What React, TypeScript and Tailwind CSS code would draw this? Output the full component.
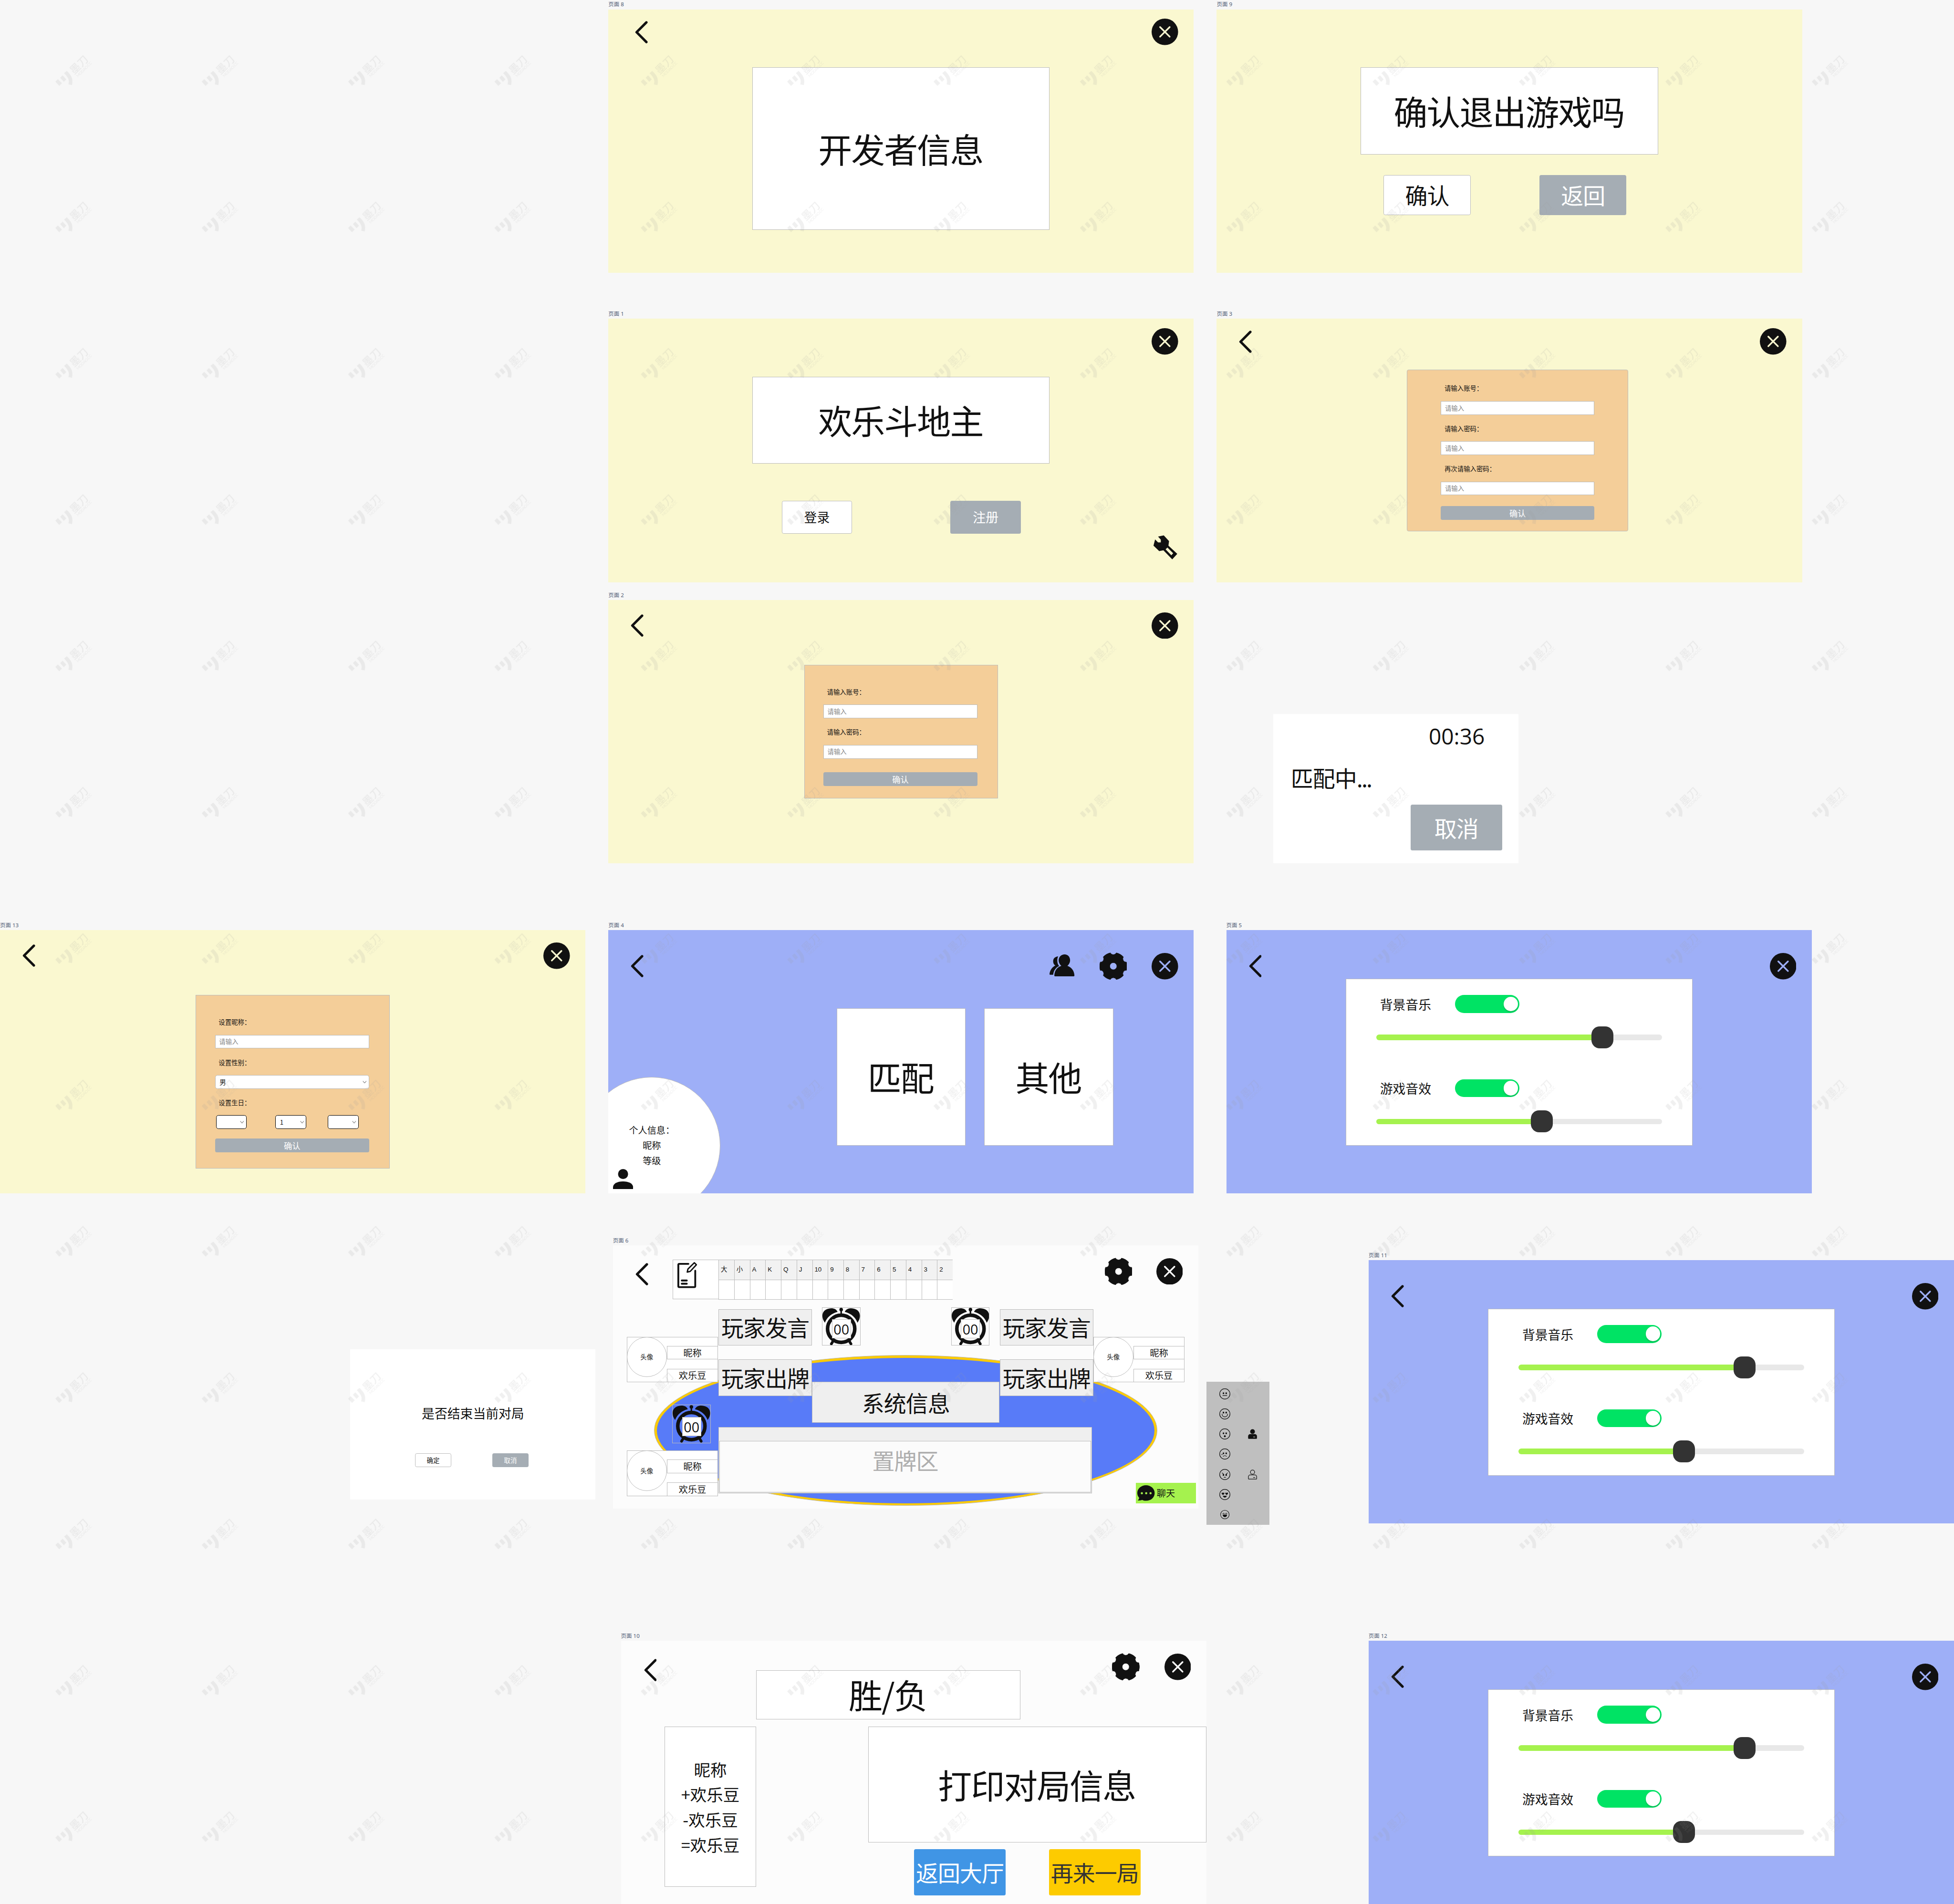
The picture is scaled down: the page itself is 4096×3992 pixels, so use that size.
import React from 'react';

type P = { className?: string; children?: React.ReactNode };

/* ---------- icons ---------- */

const BackIcon = ({ className = '' }: P) => (
  <svg viewBox="0 0 28 49" className={'h-[49px] w-[28px] shrink-0 ' + className} fill="none">
    <path d="M25 3 3.6 24.5 25 46" stroke="#111" strokeWidth="5.4" strokeLinecap="round" strokeLinejoin="round" />
  </svg>
);

const CloseIcon = ({ className = '' }: P) => (
  <svg viewBox="0 0 58 58" className={'size-[58px] shrink-0 ' + className} fill="none">
    <circle cx="29" cy="29" r="29" fill="#111" />
    <path d="M18.5 18.5 39.5 39.5M39.5 18.5 18.5 39.5" stroke="currentColor" strokeWidth="3.6" strokeLinecap="round" />
  </svg>
);

const GearIcon = ({ className = '' }: P) => (
  <svg viewBox="0 0 60 60" className={'size-[60px] shrink-0 ' + className}>
    <path
      fill="#111"
      stroke="#111"
      strokeWidth="1"
      strokeLinejoin="round"
      fillRule="evenodd"
      d="M23.500.9A7.300 7.300 0 0 0 36.500.9 30 30 0 0 1 52 9.700 7.300 7.300 0 0 0 58.600 21 30 30 0 0 1 58.600 39 7.300 7.300 0 0 0 52 50.300 30 30 0 0 1 36.500 59.100 7.300 7.300 0 0 0 23.500 59.100 30 30 0 0 1 8 50.300 7.300 7.300 0 0 0 1.400 39 30 30 0 0 1 1.400 21 7.300 7.300 0 0 0 8 9.700 30 30 0 0 1 23.500.9ZM30 22.200a7.800 7.800 0 1 0 0 15.600 7.800 7.800 0 0 0 0-15.600Z"
    />
  </svg>
);

const WrenchIcon = ({ className = '' }: P) => (
  <svg viewBox="0 0 54 54" className={'size-[54px] ' + className}>
    <path fill="#111" fillRule="evenodd" d="M11 3 23.500.4 35 13l-1.300 10L53 41 42 53 22.700 33l-9.200 2L1 23 4.500 9.500 11 16h6v-6ZM27.500 31 40 44l4-4.300L31.500 27Z" />
  </svg>
);

const GroupIcon = ({ className = '' }: P) => (
  <svg viewBox="0 0 55 48" className={'h-[48px] w-[55px] shrink-0 ' + className} fill="#111">
    <path d="M33 0c7 0 12 5.500 12 13 0 5-3 10-6 12 9 3 15 11 15.500 21 0 1-.5 2-1.500 2H12c-1 0-1.500-1-1.500-2C11 36 16 28 26 25c-3-2-6-7-6-12C20 5.500 26 0 33 0Z" />
    <path d="M19 4.500C12 5 8 9 8 15c0 4 2 8 5 9C6 28 1 34 0 43c0 1 .5 1.500 1.500 1.500H8C9 36 13 29 21 25.500 18 22 17 18 17 13c0-3 .500-6 2-8.500Z" />
  </svg>
);

const PersonIcon = ({ className = '' }: P) => (
  <svg viewBox="0 0 44 44" className={'size-[44px] ' + className} fill="#111">
    <circle cx="22" cy="11" r="11" />
    <path d="M0 44v-4c0-8 9-13 22-13s22 5 22 13v4Z" />
  </svg>
);

const NoteIcon = () => (
  <svg viewBox="0 0 44 58" className="h-[58px] w-[44px]" fill="none" stroke="#111" strokeWidth="4" strokeLinecap="round" strokeLinejoin="round">
    <path d="M24 5H4a2 2 0 0 0-2 2v47a2 2 0 0 0 2 2h33a2 2 0 0 0 2-2V20" />
    <path d="M9.500 41.500h11M9.500 48.500h11" />
    <path d="M37 2.500 41.500 7 28 21.500l-6.500 1.500 1.500-6.500Z" strokeWidth="3" />
  </svg>
);

const ClockIcon = () => (
  <svg viewBox="0 0 84 84" className="absolute inset-0 size-full" fill="none">
    <circle cx="42" cy="47" r="30.500" stroke="#111" strokeWidth="8" />
    <path d="M5.500 33.500C-4 20 0 8 8 4 18-1 30 0 34 9 20 13 10 21 5.500 33.500ZM78.500 33.500C88 20 84 8 76 4 66-1 54 0 50 9c14 4 24 12 28.500 24.500Z" fill="#111" />
    <circle cx="42" cy="4" r="4" fill="#111" />
    <path d="M42 4v11" stroke="#111" strokeWidth="3.500" />
    <path d="M23 76l-3 5M61 76l3 5" stroke="#111" strokeWidth="6" strokeLinecap="round" />
  </svg>
);

const ChatIcon = () => (
  <svg viewBox="0 0 38 34" className="h-[34px] w-[38px] shrink-0">
    <path d="M19 0c10 0 19 7 19 17s-8 17-19 17c-3 0-6-.7-8.500-2C8 33 5 33.500 1 33.500c2-2 3-4 3-6C1.500 24.500 0 21 0 17 0 7 9 0 19 0Z" fill="#111" />
    <circle cx="10" cy="17.500" r="2.400" fill="#a5f24e" />
    <circle cx="19.500" cy="17.500" r="2.400" fill="#a5f24e" />
    <circle cx="29" cy="17.500" r="2.400" fill="#a5f24e" />
  </svg>
);

const Eyes = ({ y = 10.5 }: { y?: number }) => (
  <g fill="#111" stroke="none">
    <ellipse cx="9" cy={y} rx="1.700" ry="2" />
    <ellipse cx="15" cy={y} rx="1.700" ry="2" />
  </g>
);

const faces: React.ReactNode[] = [
  <g key="neutral">
    <Eyes />
    <path d="M7.500 15.500h9" />
  </g>,
  <g key="smile">
    <Eyes y={9} />
    <path d="M6 12.500c.5 8 11.500 8 12 0" />
  </g>,
  <g key="surprised">
    <Eyes />
    <circle cx="12" cy="17" r="1.500" fill="#111" />
  </g>,
  <g key="crying">
    <Eyes />
    <path d="M8.500 17c1.500-1.800 5.500-1.800 7 0" />
    <path d="M5.800 12.500v3" strokeDasharray="1 2" strokeWidth="1.600" />
  </g>,
  <g key="angry">
    <Eyes y={13} />
    <path d="M10.500 18.500c.5-.8 2.500-.8 3 0M6 8.500l3 2.500M18 8.500l-3 2.500" />
  </g>,
  <g key="love">
    <path d="M5 9.500c0-2 2.500-2 3-.7.500-1.300 3-1.300 3 .7 0 1.500-2 3-3 3.500-1-.5-3-2-3-3.500ZM13 9.500c0-2 2.500-2 3-.7.500-1.300 3-1.300 3 .7 0 1.500-2 3-3 3.500-1-.5-3-2-3-3.500Z" fill="#111" stroke="none" />
    <path d="M8.500 15.500c1.500 3.500 5.500 3.500 7 0Z" fill="#111" />
  </g>,
  <g key="laugh">
    <path d="M6.500 9.500c1-1.500 3-1.500 4 0M13.500 9.500c1-1.500 3-1.500 4 0" />
    <path d="M7 12.500h10c-.5 7-9.500 7-10 0Z" fill="#111" />
  </g>,
];

const UserIcon = ({ solid }: { solid?: boolean }) => (
  <svg viewBox="0 0 20 22" className="h-[22px] w-[20px]" fill={solid ? '#111' : 'none'} stroke="#111" strokeWidth="1.300" strokeLinejoin="round">
    <circle cx="10" cy="5.700" r="4.600" />
    <path d="M1 20v-4.500c0-2 2-3.500 4-3.500h10c2 0 4 1.500 4 3.500V20c0 .7-.5 1-1 1H2c-.5 0-1-.3-1-1Z" />
    <path d="M11.500 17.500h4" stroke={solid ? '#bfbfbf' : '#111'} />
  </svg>
);

const Chevron = () => (
  <svg viewBox="0 0 9 6" className="h-[6px] w-[9px] shrink-0" fill="none" stroke="#888" strokeWidth="1.300">
    <path d="M.7.7 4.500 4.900 8.300.7" />
  </svg>
);

/* ---------- wireframe parts ---------- */

const Board = ({ className = '', fill, label, children }: P & { label: string; fill: string }) => (
  <section className={'absolute w-[1280px] ' + className}>
    <h2 className="h-[19px] font-['Noto_Sans','Noto_Sans_CJK_SC',sans-serif] text-[12px] leading-[16px] whitespace-nowrap text-[#4e5a73]">{label}</h2>
    <div className={'relative h-[576px] overflow-hidden ' + fill}>{children}</div>
  </section>
);

const Header = ({ className = '', children }: P) => <header className={'flex items-center pr-[34px] pl-[49px] ' + className}>{children}</header>;

const Box = ({ className = '', children }: P) => (
  <div className={'flex shrink-0 items-center justify-center border border-[#bbb] leading-none whitespace-nowrap ' + className}>{children}</div>
);

const Title = ({ className = '', children }: P) => <Box className={'bg-white pr-[2px] pb-[3px] text-[74px] tracking-[-2px] ' + className}>{children}</Box>;

const Button = ({ className = '', children }: P) => (
  <button className={'flex shrink-0 items-center justify-center rounded-[4px] leading-none whitespace-nowrap ' + className}>{children}</button>
);

const Label = ({ children }: P) => <div className="flex h-[30px] items-center pl-[8px] text-[14px] leading-none">{children}</div>;

const Input = () => (
  <div className="mt-[13px] mb-[15px] flex h-[30px] items-center border border-[#bbb] bg-white pl-[8px] text-[14px] leading-none text-[#888]">请输入</div>
);

const Select = ({ className = '', children }: P) => (
  <div className={'flex h-[30px] items-center justify-between rounded-[5px] border bg-white pr-[4px] pl-[9px] text-[14px] leading-none ' + className}>
    <span>{children}</span>
    <Chevron />
  </div>
);

const Confirm = ({ className = '' }: P) => <Button className={'h-[30px] w-full bg-[#a5adb4] text-[18px] text-white ' + className}>确认</Button>;

const SettingRow = ({ title, fill }: { title: string; fill: string }) => (
  <div className="h-[184px]">
    <div className="flex h-[39px] items-center">
      <div className="ml-[8px] w-[164px] pt-[3px] text-[28px] leading-none">{title}</div>
      <div className="flex h-[39px] w-[141px] items-center justify-end rounded-full bg-[#00e364] pr-[3px]">
        <div className="size-[32px] rounded-full bg-white shadow-[0_2px_3px_rgba(0,0,0,0.2)]" />
      </div>
    </div>
    <div className="mt-[29.500px] flex h-[48px] items-center">
      <div className={'h-[12px] rounded-l-full bg-[#a5f24e] ' + fill} />
      <div className="size-[48px] shrink-0 rounded-[18px] bg-[#333]" />
      <div className="h-[12px] flex-1 rounded-r-full bg-[#e8e8e8]" />
    </div>
  </div>
);

const Settings = ({ className = '', label }: P & { label: string }) => (
  <Board label={label} fill="bg-[#9eaff7]" className={className}>
    <Header className="h-[106px] justify-between pt-[52px]">
      <BackIcon />
      <CloseIcon className="text-[#9eaff7]" />
    </Header>
    <div className="mx-auto h-[365px] w-[758px] border border-[#bbb] bg-white pt-[35px] pr-[65px] pl-[66px]">
      <SettingRow title="背景音乐" fill="w-[470px]" />
      <SettingRow title="游戏音效" fill="w-[338px]" />
    </div>
  </Board>
);

const Player = ({ className = '' }: P) => (
  <div className={'flex h-[100px] w-[200px] shrink-0 border border-[#bbb] bg-white leading-none ' + className}>
    <div className="-mt-px -ml-px flex size-[88px] items-center justify-center rounded-full border border-[#bbb] text-[14px]">头像</div>
    <div className="-mr-px flex flex-1 flex-col justify-between pt-[19px] text-[20px]">
      <div className="flex h-[30px] items-center justify-center border border-[#bbb]">昵称</div>
      <div className="-mb-px flex h-[30px] items-center justify-center border border-[#bbb]">欢乐豆</div>
    </div>
  </div>
);

const Clock = ({ className = '' }: P) => (
  <div className={'relative flex size-[84px] shrink-0 items-center justify-center border border-[#bbb] pt-[11px] ' + className}>
    <ClockIcon />
    <div className="relative flex size-[42px] items-center justify-center border border-[#bbb] bg-white pt-[3px] font-['Open_Sans',sans-serif] text-[30px] leading-none">00</div>
  </div>
);

const Speech = () => (
  <div className="flex flex-col gap-[30px] pt-[4px]">
    <Box className="h-[80px] w-[204px] bg-[#efefef] text-[49px] tracking-[-1px]">玩家发言</Box>
    <Box className="h-[80px] w-[204px] bg-[#efefef] text-[49px] tracking-[-1px]">玩家出牌</Box>
  </div>
);

const cards = ['大', '小', 'A', 'K', 'Q', 'J', '10', '9', '8', '7', '6', '5', '4', '3', '2'];

const Watermark = () => (
  <svg className="pointer-events-none absolute inset-0 h-[4164px] w-[4272px]">
    <defs>
      <pattern id="wm" width="320" height="320" patternUnits="userSpaceOnUse">
        <g transform="translate(121 120)" fill="#999" fillOpacity="0.15">
          <path d="M0 58.500 5.500 53 14.500 62 8.500 68ZM10.500 50 16 44.700 24 53.500 18.500 59ZM19 40l6-5c8 8 15 15 11.500 31l-8-1.500C32 55 27 48 19 40Z" />
          <g transform="rotate(-45)" fontFamily="Noto Sans CJK SC">
            <text x="-1.800" y="60" fontSize="23" fontWeight="500">墨刀</text>
            <text x="0" y="70" fontSize="8.500" textLength="44" fontFamily="Lato">MODAO.CC</text>
          </g>
        </g>
      </pattern>
    </defs>
    <rect width="4272" height="4164" fill="url(#wm)" />
  </svg>
);

export default function App() {
  return (
    <div className="h-[3992px] w-[4096px] overflow-hidden bg-[#f7f7f7]">
      <main className="relative h-[4164px] w-[4272px] overflow-hidden bg-[#f7f7f7] font-['Noto_Sans_CJK_SC',sans-serif] text-[#111] [zoom:0.9588]">
        <Board label="页面 8" fill="bg-[#faf8d0]" className="top-[1.500px] left-[1330px]">
          <Header className="h-[79px] justify-between pt-[20px] pl-[58px]!">
            <BackIcon />
            <CloseIcon className="text-[#faf8d0]" />
          </Header>
          <Title className="mx-auto mt-[48px] h-[355px] w-[650px]">开发者信息</Title>
        </Board>

        <Board label="页面 9" fill="bg-[#faf8d0]" className="top-[1.500px] left-[2660px]">
          <div className="pt-[127px]">
            <Title className="mx-auto h-[190px] w-[650px]">确认退出游戏吗</Title>
            <div className="mt-[45px] flex gap-[151px] pl-[365px] text-[49px] tracking-[-1px]">
              <Button className="h-[88px] w-[190px] border border-[#bbb] bg-white">确认</Button>
              <Button className="h-[88px] w-[190px] bg-[#a5adb4] text-white">返回</Button>
            </div>
          </div>
        </Board>

        <Board label="页面 1" fill="bg-[#faf8d0]" className="top-[678px] left-[1330px]">
          <Header className="h-[80px] justify-end pt-[20px]">
            <CloseIcon className="text-[#faf8d0]" />
          </Header>
          <Title className="mx-auto mt-[47px] h-[190px] w-[650px]">欢乐斗地主</Title>
          <div className="mt-[81px] flex gap-[215px] pl-[379px] text-[28px]">
            <Button className="h-[72px] w-[154px] border border-[#bbb] bg-white">登录</Button>
            <Button className="h-[72px] w-[154px] bg-[#a5adb4] text-white">注册</Button>
          </div>
          <WrenchIcon className="mt-[3px] mr-[35px] ml-auto" />
        </Board>

        <Board label="页面 3" fill="bg-[#faf8d0]" className="top-[678px] left-[2660px]">
          <Header className="h-[80px] justify-between pt-[20px]">
            <BackIcon />
            <CloseIcon className="text-[#faf8d0]" />
          </Header>
          <div className="mt-[31px] ml-[416px] h-[354px] w-[484px] rounded-[4px] border border-[#bbb] bg-[#f4ce99] px-[73px] pt-[25px]">
            <Label>请输入账号：</Label>
            <Input />
            <Label>请输入密码：</Label>
            <Input />
            <Label>再次请输入密码：</Label>
            <Input />
            <Confirm className="mt-[24px]" />
          </div>
        </Board>

        <Board label="页面 2" fill="bg-[#faf8d0]" className="top-[1293px] left-[1330px]">
          <Header className="h-[86px] justify-between pt-[26px]">
            <BackIcon />
            <CloseIcon className="text-[#faf8d0]" />
          </Header>
          <div className="mx-auto mt-[56px] h-[292px] w-[424px] border border-[#bbb] bg-[#f4ce99] pt-[43px] pr-[44px] pl-[41px]">
            <Label>请输入账号：</Label>
            <Input />
            <Label>请输入密码：</Label>
            <Input />
            <Confirm className="mt-[30px]" />
          </div>
        </Board>

        <section className="absolute top-[1561px] left-[2784px] flex h-[327px] w-[536px] flex-col items-start bg-white pt-[24px] text-[48px] leading-none">
          <p className="mr-[74px] self-end font-['Open_Sans',sans-serif]">00:36</p>
          <p className="mt-[43px] ml-[38px] text-[49px] tracking-[-1px]">
            匹配中<span className="tracking-[-3px]">...</span>
          </p>
          <Button className="mt-[35px] ml-[300px] h-[100px] w-[200px] bg-[#a5adb4] text-[49px] tracking-[-1px] text-white">取消</Button>
        </section>

        <Board label="页面 13" fill="bg-[#faf8d0]" className="top-[2015px] left-0">
          <Header className="h-[86px] justify-between pt-[26px]">
            <BackIcon />
            <CloseIcon className="text-[#faf8d0]" />
          </Header>
          <div className="mx-auto mt-[56px] h-[379px] w-[424px] border border-[#bbb] bg-[#f4ce99] pt-[43px] pr-[44px] pl-[41px]">
            <Label>设置昵称：</Label>
            <Input />
            <Label>设置性别：</Label>
            <Select className="mt-[13px] mb-[15px] border-[#bbb]">男</Select>
            <Label>设置生日：</Label>
            <div className="mt-[13px] flex pl-[2px]">
              <Select className="w-[67px] border-black" />
              <Select className="ml-[63px] w-[68px] border-black">1</Select>
              <Select className="ml-[47px] w-[67px] border-black" />
            </div>
            <Confirm className="mt-[21px]" />
          </div>
        </Board>

        <Board label="页面 4" fill="bg-[#9eaff7]" className="top-[2015px] left-[1330px]">
          <Header className="h-[109px] gap-[54px] pt-[49px]">
            <BackIcon className="mr-auto" />
            <GroupIcon className="mb-[4px]" />
            <GearIcon />
            <CloseIcon className="text-[#9eaff7]" />
          </Header>
          <div className="mt-[62px] flex gap-[41px] pl-[499px]">
            <Title className="h-[300px] w-[282px]">匹配</Title>
            <Title className="h-[300px] w-[282px]">其他</Title>
          </div>
          <div className="absolute top-[321px] left-[-55px] size-[300px] rounded-full border border-[#bbb] bg-white pt-[98px] text-center text-[20px] leading-[33.500px]">
            <p>个人信息：</p>
            <p>昵称</p>
            <p>等级</p>
            <PersonIcon className="mt-[2px] ml-[64px]" />
          </div>
        </Board>

        <Settings label="页面 5" className="top-[2015px] left-[2681px]" />
        <Settings label="页面 11" className="top-[2736.500px] left-[2992px]" />
        <Settings label="页面 12" className="top-[3569px] left-[2992px]" />

        <Board label="页面 6" fill="bg-[#fcfcfc]" className="top-[2704px] left-[1340px]">
          <div className="absolute top-[240px] left-[90px] h-[330px] w-[1100px] rounded-[50%] border border-[#bbb] bg-[#fdcb00] p-[5px]">
            <div className="size-full rounded-[50%] bg-[#587bf8]" />
          </div>
          <header className="relative flex h-[118px] items-start pt-[28px] pr-[34px] pl-[49px]">
            <BackIcon className="mt-[11px]" />
            <div className="mt-[4px] ml-[54px] h-[86px] w-[100px] border border-r-0 border-[#bbb] bg-white pt-[3px] pl-[9px]">
              <NoteIcon />
            </div>
            <div className="mt-[3px] grid w-[512px] grid-cols-15 border-y border-[#bbb] font-['Liberation_Sans','Noto_Sans_CJK_SC',sans-serif] text-[14px] leading-none">
              {cards.map((c) => (
                <div key={c} className="border-l border-[#bbb]">
                  <div className="flex h-[44px] items-center border-b border-[#bbb] bg-[#f2f2f2] pl-[4px]">{c}</div>
                  <div className="h-[42px] bg-white" />
                </div>
              ))}
            </div>
            <GearIcon className="-mt-px ml-auto" />
            <CloseIcon className="ml-[53px] text-white" />
          </header>
          <div className="relative flex items-start">
            <div className="flex w-[231px] shrink-0 flex-col pt-[82px] pl-[30px]">
              <Player />
              <Clock className="mt-[49px] ml-[100px]" />
              <Player className="mt-[16px]" />
            </div>
            <div className="w-[819px] shrink-0 pt-[17.500px]">
              <div className="flex items-start justify-between">
                <Speech />
                <div>
                  <div className="flex justify-between px-[22px]">
                    <Clock />
                    <Clock />
                  </div>
                  <Box className="mt-[79px] h-[90px] w-[410px] bg-[#efefef] text-[49px] tracking-[-1px]">系统信息</Box>
                </div>
                <Speech />
              </div>
              <div className="mt-[9.500px] h-[145px] w-[816px] border border-[#bbb] bg-[#efefef] px-px pt-[29px] pb-px">
                <div className="flex h-full justify-center border border-[#bbb] bg-[#fbfbfb] pt-[17px] text-[49px] leading-none tracking-[-1px] text-[#aeaeae]">置牌区</div>
              </div>
            </div>
            <div className="pt-[82px]">
              <Player />
              <div className="mt-[220px] ml-[93px] flex h-[44px] w-[132px] items-center gap-[4px] bg-[#a5f24e] pl-[4px] text-[20px] leading-none">
                <ChatIcon />
                聊天
              </div>
            </div>
          </div>
        </Board>

        <section className="absolute top-[3022px] left-[2638px] flex h-[312px] w-[137px] bg-[#bfbfbf]">
          <div className="ml-[28px] flex w-[24px] flex-col items-center pt-[4px]">
            {faces.map((face, i) => (
              <div key={i} className="flex h-[44px] items-center">
                <svg viewBox="0 0 24 24" className={i === 6 ? 'size-[20px]' : 'size-[24px]'} fill="none" stroke="#111" strokeWidth="1.300" strokeLinecap="round">
                  <circle cx="12" cy="12" r="11.300" />
                  {face}
                </svg>
              </div>
            ))}
          </div>
          <div className="ml-[38px] flex flex-col gap-[66px] pt-[103px]">
            <UserIcon solid />
            <UserIcon />
          </div>
        </section>

        <section className="absolute top-[2951px] left-[766px] flex h-[328px] w-[536px] flex-col items-center bg-white leading-none">
          <p className="mt-[126px] text-[28px]">是否结束当前对局</p>
          <div className="mt-[73px] flex gap-[89px] pr-[5px] text-[14px]">
            <Button className="h-[30px] w-[80px] border border-[#bbb]">确定</Button>
            <Button className="h-[30px] w-[80px] bg-[#a5adb4] text-white">取消</Button>
          </div>
        </section>

        <Board label="页面 10" fill="bg-[#fcfcfc]" className="top-[3569px] left-[1357.500px]">
          <header className="flex h-[172px] items-start pt-[28px] pr-[34px] pl-[50px]">
            <BackIcon className="mt-[11px]" />
            <Title className="mt-[36px] ml-[218px] h-[108px] w-[577px]">胜/负</Title>
            <GearIcon className="-mt-px ml-auto" />
            <CloseIcon className="ml-[54px] text-white" />
          </header>
          <div className="mt-[16px] flex items-start gap-[245px] pl-[95.500px]">
            <Box className="h-[350px] w-[200px] flex-col bg-white text-[36px] leading-[55px]!">
              <p>昵称</p>
              <p>+欢乐豆</p>
              <p>-欢乐豆</p>
              <p>=欢乐豆</p>
            </Box>
            <div className="shrink-0">
              <Title className="h-[253px] w-[739.500px]">打印对局信息</Title>
              <div className="mt-[15px] flex gap-[95px] pl-[100.500px] text-[49px] tracking-[-1px]">
                <Button className="h-[101px] w-[200px] bg-[#4095e5] text-white">返回大厅</Button>
                <Button className="h-[101px] w-[200px] bg-[#fdcb00] text-[#333]">再来一局</Button>
              </div>
            </div>
          </div>
        </Board>

        <Watermark />
      </main>
    </div>
  );
}
